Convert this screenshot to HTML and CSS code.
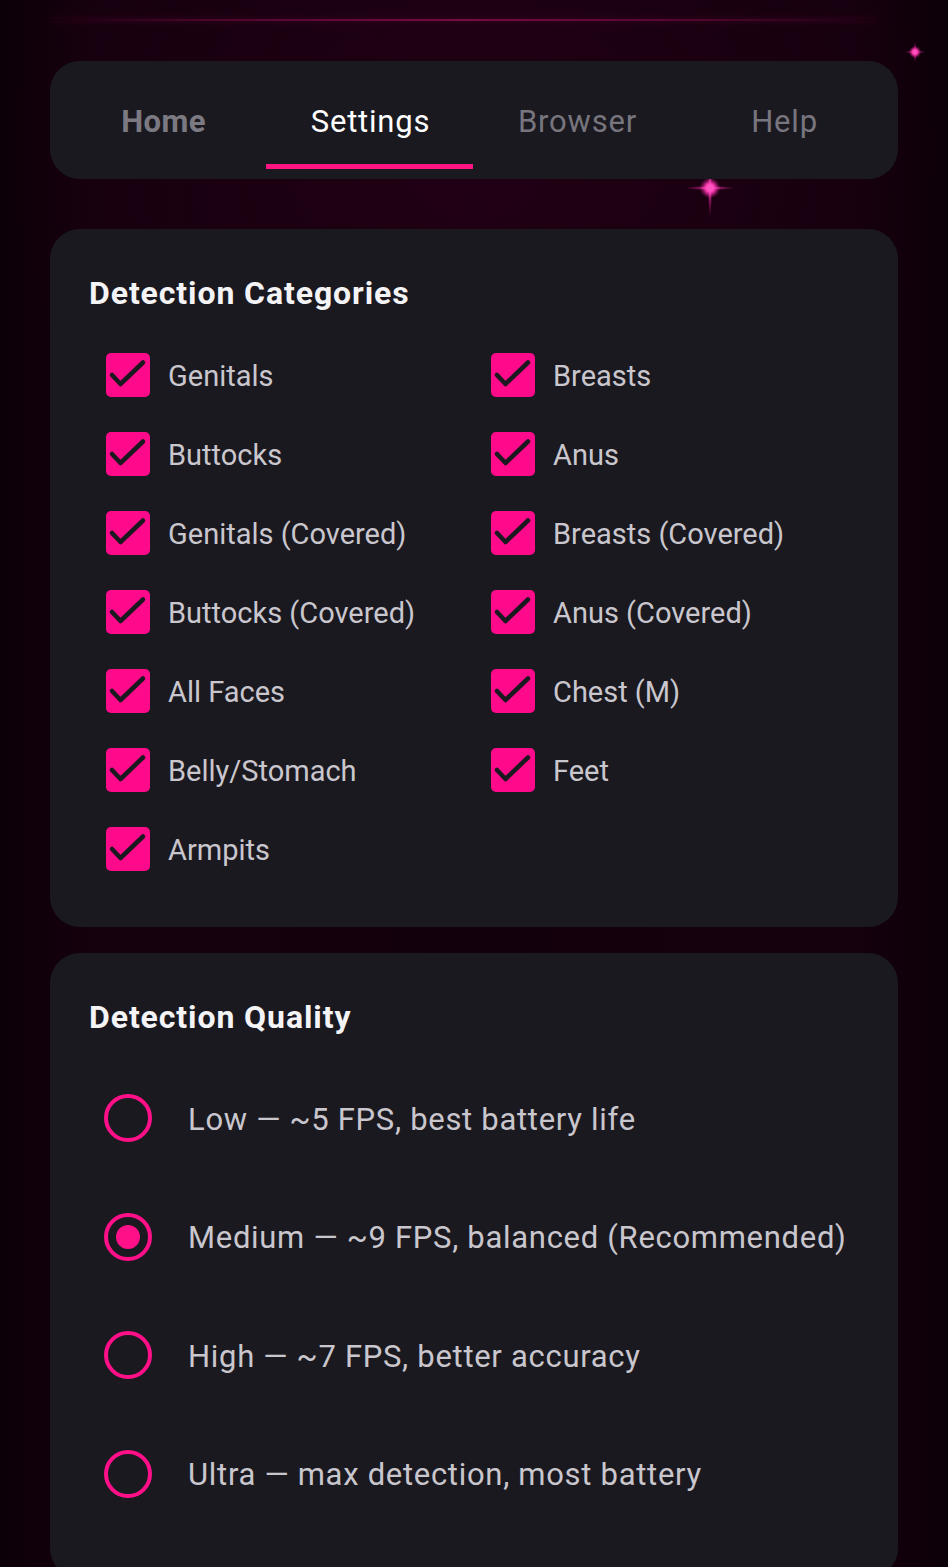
FILE: index.html
```html
<!DOCTYPE html>
<html lang="en">
<head>
<meta charset="utf-8">
<title>Settings</title>
<link rel="stylesheet" href="styles.css">
</head>
<body>
<div class="glow-line"></div>
<div class="sparkle sparkle-a"></div>
<div class="sparkle sparkle-b"></div>
<main class="page">
  <nav class="tabs">
    <div class="tab tab-bold">Home</div>
    <div class="tab tab-active">Settings</div>
    <div class="tab">Browser</div>
    <div class="tab">Help</div>
  </nav>

  <section class="card">
    <h2 class="card-title">Detection Categories</h2>
    <div class="check-grid">
      <label class="check"><span class="box"><svg viewBox="0 0 44 44"><path d="M6 22 L14.5 31 L37 9.5"/></svg></span><span class="check-label">Genitals</span></label>
      <label class="check"><span class="box"><svg viewBox="0 0 44 44"><path d="M6 22 L14.5 31 L37 9.5"/></svg></span><span class="check-label">Breasts</span></label>
      <label class="check"><span class="box"><svg viewBox="0 0 44 44"><path d="M6 22 L14.5 31 L37 9.5"/></svg></span><span class="check-label">Buttocks</span></label>
      <label class="check"><span class="box"><svg viewBox="0 0 44 44"><path d="M6 22 L14.5 31 L37 9.5"/></svg></span><span class="check-label">Anus</span></label>
      <label class="check"><span class="box"><svg viewBox="0 0 44 44"><path d="M6 22 L14.5 31 L37 9.5"/></svg></span><span class="check-label">Genitals (Covered)</span></label>
      <label class="check"><span class="box"><svg viewBox="0 0 44 44"><path d="M6 22 L14.5 31 L37 9.5"/></svg></span><span class="check-label">Breasts (Covered)</span></label>
      <label class="check"><span class="box"><svg viewBox="0 0 44 44"><path d="M6 22 L14.5 31 L37 9.5"/></svg></span><span class="check-label">Buttocks (Covered)</span></label>
      <label class="check"><span class="box"><svg viewBox="0 0 44 44"><path d="M6 22 L14.5 31 L37 9.5"/></svg></span><span class="check-label">Anus (Covered)</span></label>
      <label class="check"><span class="box"><svg viewBox="0 0 44 44"><path d="M6 22 L14.5 31 L37 9.5"/></svg></span><span class="check-label">All Faces</span></label>
      <label class="check"><span class="box"><svg viewBox="0 0 44 44"><path d="M6 22 L14.5 31 L37 9.5"/></svg></span><span class="check-label">Chest (M)</span></label>
      <label class="check"><span class="box"><svg viewBox="0 0 44 44"><path d="M6 22 L14.5 31 L37 9.5"/></svg></span><span class="check-label">Belly/Stomach</span></label>
      <label class="check"><span class="box"><svg viewBox="0 0 44 44"><path d="M6 22 L14.5 31 L37 9.5"/></svg></span><span class="check-label">Feet</span></label>
      <label class="check"><span class="box"><svg viewBox="0 0 44 44"><path d="M6 22 L14.5 31 L37 9.5"/></svg></span><span class="check-label">Armpits</span></label>
    </div>
  </section>

  <section class="card card-quality">
    <h2 class="card-title">Detection Quality</h2>
    <div class="radio-list">
      <div class="radio"><span class="ring"></span><span class="radio-label">Low — ~5 FPS, best battery life</span></div>
      <div class="radio selected"><span class="ring"><span class="dot"></span></span><span class="radio-label">Medium — ~9 FPS, balanced (Recommended)</span></div>
      <div class="radio"><span class="ring"></span><span class="radio-label">High — ~7 FPS, better accuracy</span></div>
      <div class="radio"><span class="ring"></span><span class="radio-label">Ultra — max detection, most battery</span></div>
    </div>
  </section>
</main>
</body>
</html>
```

FILE: styles.css
```css
* { box-sizing: border-box; }

html, body {
  margin: 0;
  padding: 0;
}

body {
  width: 948px;
  height: 1567px;
  overflow: hidden;
  position: relative;
  font-family: Roboto, "Noto Sans", sans-serif;
  background:
    radial-gradient(ellipse 70% 40% at 50% 10%, rgba(60, 0, 35, 0.35), transparent 70%),
    linear-gradient(90deg, #0c0008 0%, #15000e 10%, #13000d 50%, #15000e 90%, #0c0008 100%);
  color: #c9c7cd;
}

.glow-line {
  position: absolute;
  left: 50px;
  right: 70px;
  top: 19px;
  height: 2px;
  background: linear-gradient(90deg, transparent 0%, rgba(130, 10, 70, 0.5) 20%, rgba(160, 15, 90, 0.7) 50%, rgba(130, 10, 70, 0.5) 80%, transparent 100%);
  box-shadow: 0 0 6px rgba(160, 15, 90, 0.35);
}

.sparkle {
  position: absolute;
  border-radius: 50%;
  background: radial-gradient(circle, #ffb3e6 0%, #ff3cb4 30%, rgba(255, 40, 170, 0.35) 55%, transparent 75%);
}
.sparkle::before,
.sparkle::after {
  content: "";
  position: absolute;
  left: 50%;
  top: 50%;
  transform: translate(-50%, -50%);
  background: radial-gradient(ellipse, rgba(255, 90, 200, 0.9) 0%, rgba(255, 40, 170, 0.4) 40%, transparent 75%);
}
.sparkle-a {
  left: 909px;
  top: 46px;
  width: 12px;
  height: 12px;
}
.sparkle-a::before { width: 22px; height: 2px; }
.sparkle-a::after { width: 2px; height: 22px; }

.sparkle-b {
  left: 700px;
  top: 178px;
  width: 20px;
  height: 20px;
}
.sparkle-b::before { width: 46px; height: 4px; }
.sparkle-b::after { width: 4px; height: 54px; }

.page {
  position: relative;
  padding: 61px 50px 0;
  display: flex;
  flex-direction: column;
}

.tabs {
  height: 118px;
  background: #1b1920;
  border-radius: 30px;
  padding: 0 10px;
  display: grid;
  grid-template-columns: repeat(4, 1fr);
  align-items: stretch;
  margin-bottom: 50px;
}

.tab {
  position: relative;
  display: flex;
  align-items: center;
  justify-content: center;
  padding-top: 3px;
  font-size: 31px;
  letter-spacing: 0.8px;
  color: #77757d;
}
.tab-bold {
  font-weight: 700;
  color: #7b7981;
  letter-spacing: 0.4px;
}
.tab-active {
  color: #ffffff;
}
.tab-active::after {
  content: "";
  position: absolute;
  left: -1px;
  right: 1px;
  bottom: 10px;
  height: 5px;
  background: #ff1481;
}

.card {
  background: #1b1920;
  border-radius: 30px;
  padding: 46px 39px 56px;
  margin-bottom: 26px;
}

.card-title {
  margin: 0;
  font-size: 32px;
  line-height: 36px;
  font-weight: 700;
  letter-spacing: 0.9px;
  color: #f4f3f6;
}

.check-grid {
  margin-top: 42px;
  padding-left: 17px;
  display: grid;
  grid-template-columns: 385px 1fr;
  row-gap: 35px;
}

.check {
  display: flex;
  align-items: center;
  height: 44px;
}

.box {
  width: 44px;
  height: 44px;
  border-radius: 5px;
  background: #ff0a8a;
  flex: none;
  display: flex;
}
.box svg {
  width: 44px;
  height: 44px;
}
.box path {
  fill: none;
  stroke: #1b1920;
  stroke-width: 4.5;
  stroke-linecap: round;
  stroke-linejoin: round;
}

.check-label {
  margin-left: 18px;
  padding-top: 2px;
  font-size: 29px;
  color: #c9c7cd;
}

.card-quality {
  padding-bottom: 80px;
}

.radio-list {
  margin-top: 59px;
  padding-left: 15px;
  display: flex;
  flex-direction: column;
  gap: 70.5px;
}

.radio {
  display: flex;
  align-items: center;
  height: 48px;
}

.ring {
  width: 48px;
  height: 48px;
  border: 4px solid #ff0f88;
  border-radius: 50%;
  flex: none;
  display: flex;
  align-items: center;
  justify-content: center;
}
.dot {
  width: 24px;
  height: 24px;
  border-radius: 50%;
  background: #ff0f88;
}

.radio-label {
  margin-left: 36px;
  padding-top: 2px;
  font-size: 31px;
  letter-spacing: 0.7px;
  color: #c9c7cd;
}
```
